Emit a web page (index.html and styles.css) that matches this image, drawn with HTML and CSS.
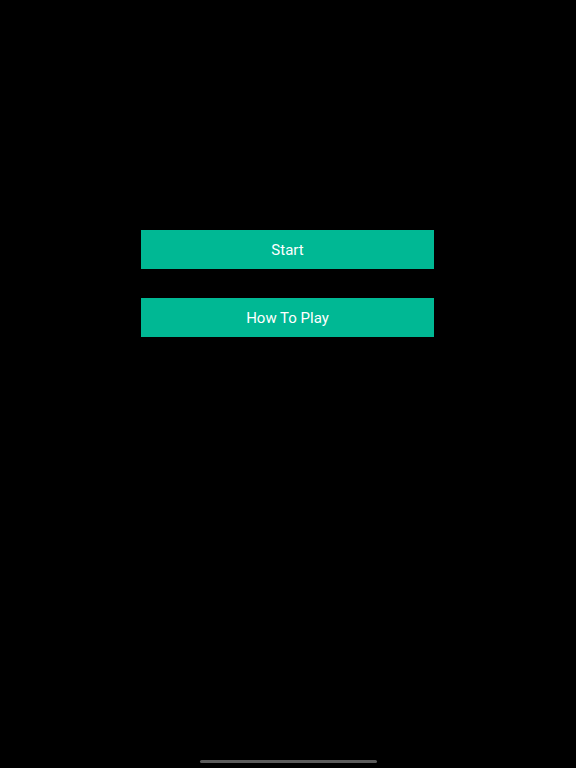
FILE: index.html
```html
<!DOCTYPE html>
<html>
<head>
<meta charset="utf-8">
<link rel="stylesheet" href="styles.css">
</head>
<body>
<div class="screen">
  <div class="menu">
    <button class="btn">Start</button>
    <button class="btn">How To Play</button>
  </div>
  <div class="home-bar"></div>
</div>
</body>
</html>
```
FILE: styles.css
```css
html, body {
  margin: 0;
  padding: 0;
  background: #000;
}
.screen {
  height: 768px;
  display: flex;
  flex-direction: column;
  align-items: center;
  box-sizing: border-box;
  padding-top: 230px;
  padding-bottom: 5px;
}
.menu {
  display: flex;
  flex-direction: column;
  gap: 29px;
}
.btn {
  width: 293px;
  height: 39px;
  margin: 0 0 0 -1px;
  border: none;
  padding: 1px 0 0 0;
  background: #00b894;
  color: #fff;
  font-family: Roboto, "Liberation Sans", sans-serif;
  font-size: 15px;
  font-weight: 400;
}
.home-bar {
  margin-top: auto;
  width: 177px;
  height: 3px;
  border-radius: 2px;
  background: #5c5c5c;
}
```
